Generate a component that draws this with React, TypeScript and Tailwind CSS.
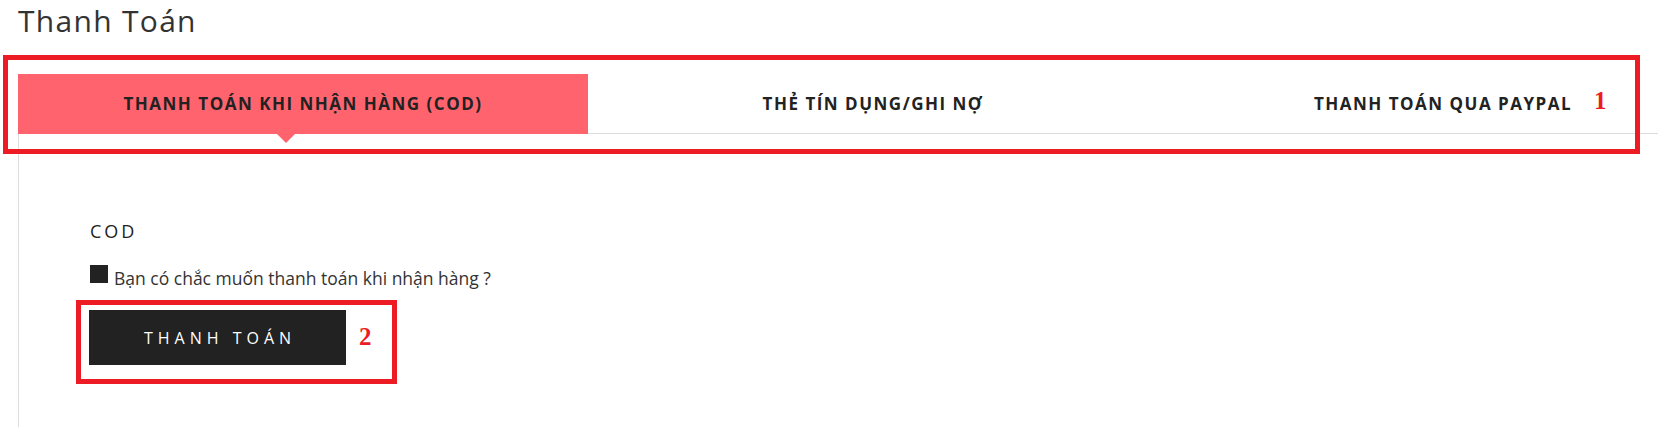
export default function App() {
  const tabs = [
    { label: "THANH TOÁN KHI NHẬN HÀNG (COD)", active: true },
    { label: "THẺ TÍN DỤNG/GHI NỢ", active: false },
    { label: "THANH TOÁN QUA PAYPAL", active: false },
  ];

  return (
    <main className="relative w-[1658px] h-[427px] overflow-hidden bg-white font-['Open_Sans',sans-serif] text-[#333]">
      <h1 className="pt-[1px] pl-[18px] text-[30px] leading-[40px] tracking-[1.3px] text-[#333]">Thanh Toán</h1>

      {/* tabs */}
      <div className="mt-[33px] ml-[18px] flex w-[1710px]">
        {tabs.map((t) => (
          <div
            key={t.label}
            className={
              t.active
                ? "relative flex h-[60px] w-[570px] items-center justify-center bg-[#ff646e]"
                : "flex h-[60px] w-[570px] items-center justify-center border-b border-[#dddddd]"
            }
          >
            <span className="text-[17px] font-bold tracking-[1.5px] text-[#222]">{t.label}</span>
            {t.active && (
              <span className="absolute left-[258px] top-[59px] h-0 w-0 border-x-[10px] border-t-[10px] border-x-transparent border-t-[#ff646e]" />
            )}
          </div>
        ))}
      </div>

      {/* panel */}
      <section className="ml-[18px] h-[300px] border-l border-[#dddddd] pl-[71px] pt-[85px]">
        <h3 className="text-[18px] font-medium leading-[24px] tracking-[3px] text-[#222]">COD</h3>
        <label className="mt-[22px] flex items-start gap-[6px]">
          <span className="h-[18px] w-[18px] bg-[#222]" />
          <span className="mt-[1px] text-[17.5px] leading-[24px] text-[#333]">Bạn có chắc muốn thanh toán khi nhận hàng ?</span>
        </label>
        <button className="mt-[20px] -ml-[1px] flex h-[55px] w-[257px] items-center justify-center bg-[#222] pl-[5px] text-[16px] tracking-[5px] text-white">
          THANH TOÁN
        </button>
      </section>

      {/* annotations */}
      <div className="absolute left-[3px] top-[55px] h-[99px] w-[1637px] border-[5px] border-[#ed1c24]" />
      <span className="absolute left-[1594px] top-[86px] font-['Liberation_Serif',serif] text-[25px] font-bold leading-[30px] text-[#ed1c24]">1</span>
      <div className="absolute left-[76px] top-[300px] h-[84px] w-[321px] border-[5px] border-[#ed1c24]" />
      <span className="absolute left-[359px] top-[322px] font-['Liberation_Serif',serif] text-[25px] font-bold leading-[30px] text-[#ed1c24]">2</span>
    </main>
  );
}
